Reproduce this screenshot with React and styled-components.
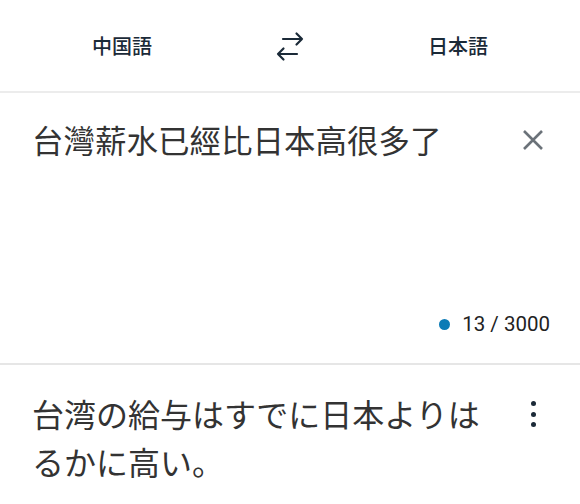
import React from "react";
import styled, { createGlobalStyle } from "styled-components";

const Global = createGlobalStyle`
  html, body { margin: 0; padding: 0; background: #ffffff; }
  body { font-family: "Noto Sans CJK JP", "Noto Sans", sans-serif; }
`;

const Page = styled.div`
  width: 580px;
  display: flex;
  flex-direction: column;
`;

const Header = styled.div`
  height: 91px;
  display: grid;
  grid-template-columns: 1fr 92px 1fr;
  align-items: center;
  border-bottom: 2px solid #ececec;
`;

const Lang = styled.button`
  border: 0;
  background: none;
  padding: 0;
  font-family: "Noto Sans CJK JP", sans-serif;
  font-size: 20px;
  font-weight: 500;
  color: #1b2a38;
  text-align: center;
  line-height: 28px;
`;

const SwapBtn = styled.button`
  border: 0;
  background: none;
  padding: 0;
  display: flex;
  justify-content: center;
  align-items: center;
  height: 40px;
`;

const Source = styled.div`
  height: 272px;
  box-sizing: border-box;
  padding: 26px 27px 27px 32px;
  display: flex;
  flex-direction: column;
  border-bottom: 2px solid #e6e6e6;
`;

const SourceRow = styled.div`
  flex: 1;
  display: flex;
  align-items: flex-start;
  justify-content: space-between;
`;

const SourceText = styled.div`
  font-family: "Noto Sans CJK TC", sans-serif;
  font-size: 31.5px;
  line-height: 40px;
  color: #333333;
`;

const IconBtn = styled.button`
  border: 0;
  background: none;
  padding: 0;
  width: 40px;
  height: 40px;
  display: flex;
  align-items: center;
  justify-content: center;
  margin-top: ${(p) => p.$top || 0}px;
`;

const Counter = styled.div`
  display: flex;
  justify-content: flex-end;
  align-items: center;
  gap: 12px;
  padding-right: 3px;
  font-family: Roboto, "Liberation Sans", sans-serif;
  font-size: 20.5px;
  line-height: 24px;
  color: #222222;
`;

const Dot = styled.span`
  width: 11px;
  height: 11px;
  border-radius: 50%;
  background: #0b7bb6;
`;

const Result = styled.div`
  padding: 24px 27px 0 32px;
  display: flex;
  align-items: flex-start;
  justify-content: space-between;
`;

const ResultText = styled.div`
  width: 470px;
  font-family: "Noto Sans CJK JP", sans-serif;
  font-size: 32px;
  line-height: 48px;
  color: #333333;
`;

const Kebab = styled.div`
  width: 40px;
  display: flex;
  flex-direction: column;
  align-items: center;
  gap: 5.5px;
  padding-top: 12px;
`;

const KDot = styled.span`
  width: 5px;
  height: 5px;
  border-radius: 50%;
  background: #1b2a38;
`;

const SwapIcon = () => (
  <svg width="32" height="32" viewBox="0 0 32 32" fill="none" stroke="#1b2a38" strokeWidth="2.2" strokeLinecap="round" strokeLinejoin="round">
    <path d="M9 9 H28 M22.5 3.5 L28 9 L22.5 14.5" />
    <path d="M23 24 H4 M9.5 18.5 L4 24 L9.5 29.5" />
  </svg>
);

const CloseIcon = () => (
  <svg width="20" height="20" viewBox="0 0 20 20" stroke="#6b7279" strokeWidth="2.6" strokeLinecap="butt">
    <path d="M1 1 L19 19 M19 1 L1 19" />
  </svg>
);

export default function App() {
  return (
    <Page>
      <Global />
      <Header>
        <Lang>中国語</Lang>
        <SwapBtn aria-label="swap">
          <SwapIcon />
        </SwapBtn>
        <Lang>日本語</Lang>
      </Header>
      <Source>
        <SourceRow>
          <SourceText>台灣薪水已經比日本高很多了</SourceText>
          <IconBtn aria-label="clear" $top={1}>
            <CloseIcon />
          </IconBtn>
        </SourceRow>
        <Counter>
          <Dot />
          <span>13 / 3000</span>
        </Counter>
      </Source>
      <Result>
        <ResultText>台湾の給与はすでに日本よりはるかに高い。</ResultText>
        <Kebab>
          <KDot />
          <KDot />
          <KDot />
        </Kebab>
      </Result>
    </Page>
  );
}
